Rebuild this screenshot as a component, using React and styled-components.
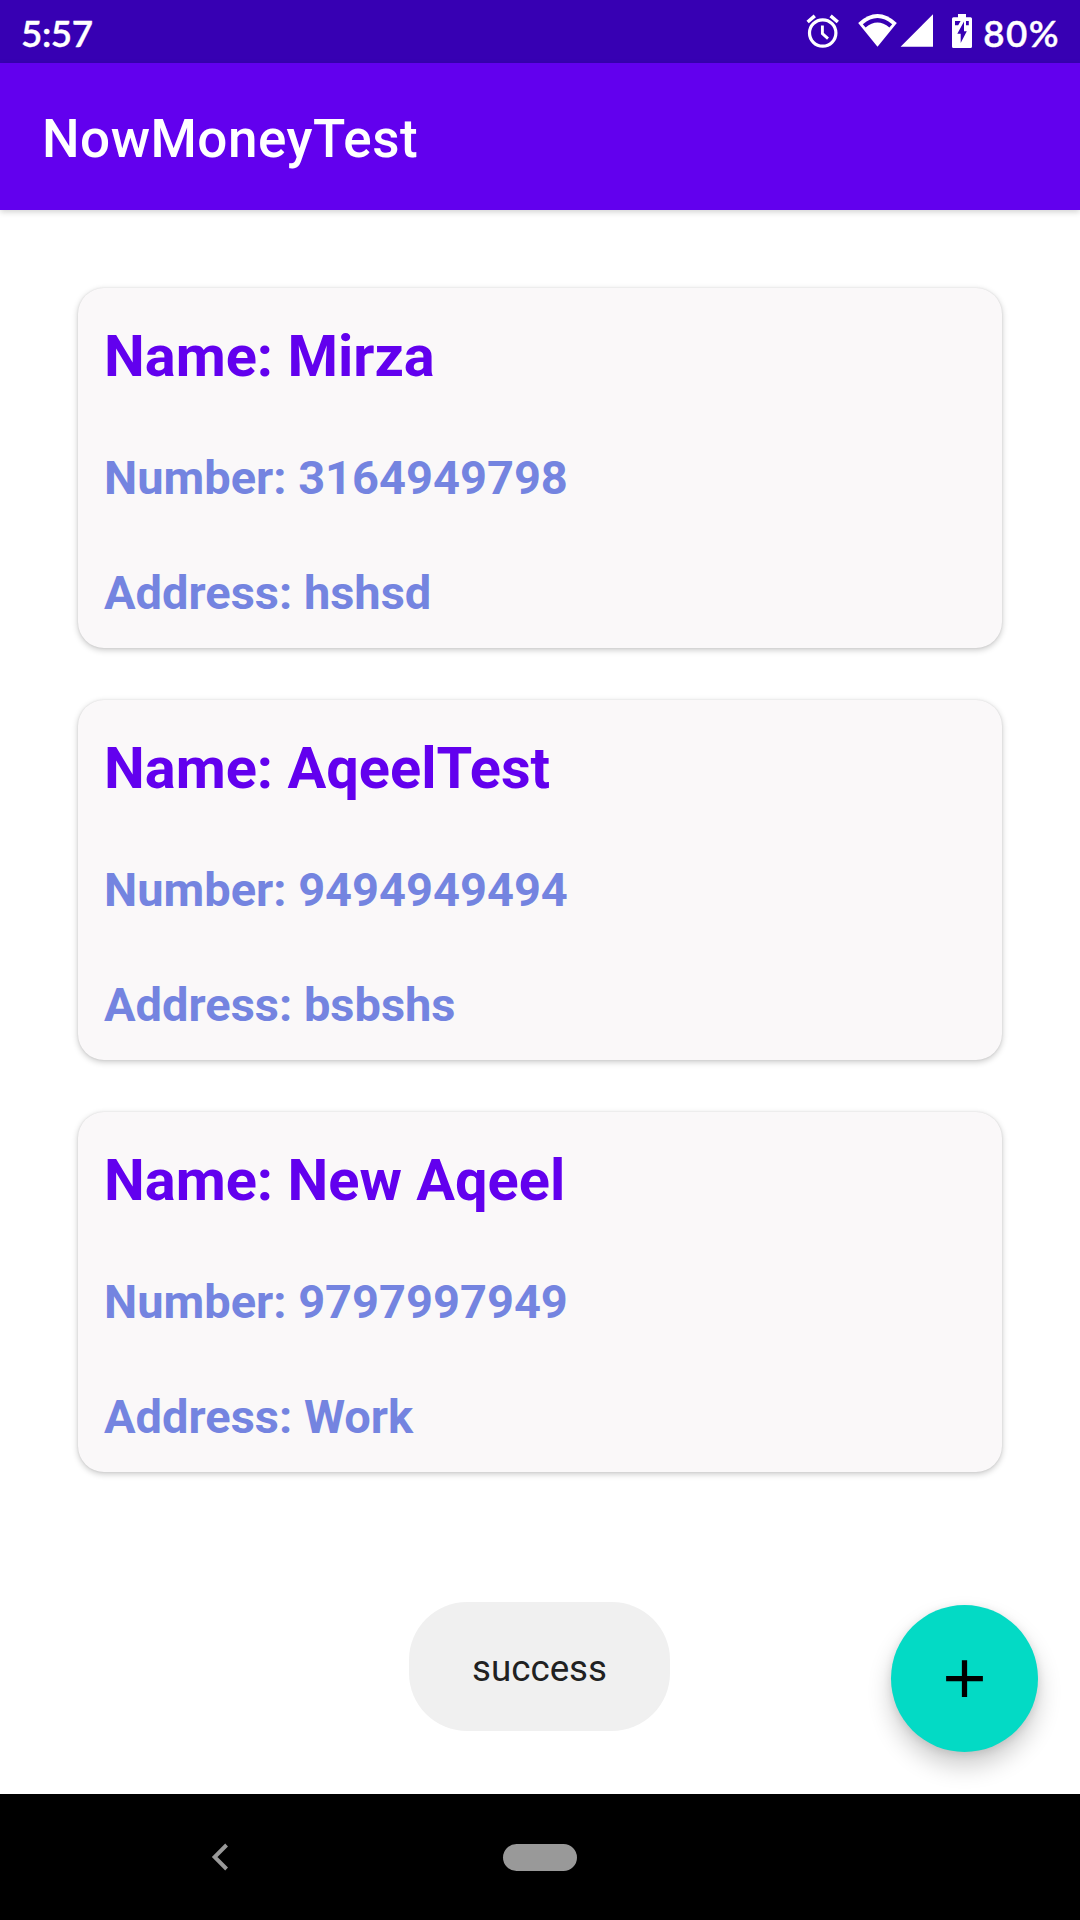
import React from "react";
import styled, { createGlobalStyle } from "styled-components";

const GlobalStyle = createGlobalStyle`
  body { margin: 0; background: #fff; }
  * { box-sizing: border-box; }
`;

const Screen = styled.div`
  position: relative;
  display: flex;
  flex-direction: column;
  width: 1080px;
  height: 1920px;
  overflow: hidden;
  background: #fff;
  font-family: Roboto, "Liberation Sans", sans-serif;
`;

const StatusBar = styled.header`
  display: flex;
  align-items: center;
  height: 63px;
  padding: 0 21px;
  background: #3700b3;
  color: #fff;
  font-family: Lato, Roboto, sans-serif;
  font-size: 36.75px;
  font-weight: 600;
  line-height: 44px;
  -webkit-text-stroke: 0.4px #fff;
`;

const Clock = styled.time`
  flex: 1;
  padding-top: 3px;
  letter-spacing: -0.4px;
`;

const Battery = styled.span`
  padding-top: 3px;
  margin: 0 -1px 0 10px;
  letter-spacing: 1.4px;
`;

const StatusIcon = styled.svg`
  flex: none;
  display: block;
  height: 63px;
  width: ${(p) => p.$width}px;
  margin-left: ${(p) => p.$gap || 0}px;
`;

const AppBar = styled.div`
  position: relative;
  display: flex;
  align-items: center;
  height: 147px;
  padding: 5px 42px 0;
  background: #6200ee;
  box-shadow: 0 2px 6px rgba(0, 0, 0, 0.18);
`;

const Title = styled.h1`
  margin: 0;
  color: #fff;
  font-size: 53px;
  font-weight: 500;
  line-height: 62px;
  letter-spacing: 0.5px;
`;

const List = styled.main`
  flex: 1;
  display: flex;
  flex-direction: column;
  gap: 52px;
  padding: 78px 78px 0;
`;

const Card = styled.article`
  height: 360px;
  padding: 34px 26px 0;
  border-radius: 26px;
  background: #faf8f9;
  box-shadow: 0 2px 6px rgba(0, 0, 0, 0.22), 0 0 2px rgba(0, 0, 0, 0.1);
`;

const Name = styled.h2`
  margin: 0 0 60px;
  color: #6200ee;
  font-size: 57.75px;
  font-weight: 700;
  line-height: 68px;
`;

const Detail = styled.p`
  margin: 0 0 59px;
  color: #7484e0;
  font-size: 47px;
  font-weight: 700;
  line-height: 56px;
`;

const Toast = styled.div`
  position: absolute;
  left: 409px;
  top: 1602px;
  display: flex;
  align-items: center;
  justify-content: center;
  width: 261px;
  height: 129px;
  padding-top: 4px;
  border-radius: 58px;
  background: #f0f0f0;
  color: #212121;
  font-size: 36.75px;
  line-height: 43px;
`;

const AddButton = styled.button`
  position: absolute;
  left: 891px;
  top: 1605px;
  display: grid;
  place-items: center;
  width: 147px;
  height: 147px;
  padding: 0;
  border: 0;
  border-radius: 50%;
  background: #03dac5;
  box-shadow: 0 14px 24px rgba(0, 0, 0, 0.2), 0 2px 8px rgba(0, 0, 0, 0.1);
`;

const NavBar = styled.nav`
  display: flex;
  align-items: center;
  height: 126px;
  padding-left: 210px;
  background: #000;
`;

const HomePill = styled.span`
  width: 74px;
  height: 27px;
  margin-left: 273px;
  border-radius: 14px;
  background: #999;
`;

const contacts = [
  { name: "Mirza", number: "3164949798", address: "hshsd" },
  { name: "AqeelTest", number: "9494949494", address: "bsbshs" },
  { name: "New Aqeel", number: "9797997949", address: "Work" },
];

const AlarmIcon = () => (
  <StatusIcon $width={34} viewBox="806 0 34 63" fill="none" stroke="#fff">
    <circle cx="822.7" cy="33" r="13.2" strokeWidth="3.2" />
    <path d="M822.4 25.5v8.2l5.6 4.9" strokeWidth="2.9" />
    <path d="M807.6 22l7.2-6.2M830.6 15.8l7.2 6.2" strokeWidth="3.5" />
  </StatusIcon>
);

const WifiIcon = () => (
  <StatusIcon $width={40} $gap={17} viewBox="857 0 40 63">
    <path fill="#fff" d="M877.5 46.7L858.2 23Q877.5 5.2 896.8 23Z" />
    <path fill="#3700b3" d="M862.8 24.2Q877.5 12 892.2 24.2L889.4 27.6Q877.5 17.4 865.6 27.6Z" />
  </StatusIcon>
);

const SignalIcon = () => (
  <StatusIcon $width={34} $gap={3} viewBox="900 0 34 63">
    <path fill="#fff" d="M900.6 46.7H933V14.2Z" />
  </StatusIcon>
);

const BatteryIcon = () => (
  <StatusIcon $width={22} $gap={17} viewBox="951 0 22 63">
    <path fill="#fff" d="M958 14h8v3.3h4.5a1.5 1.5 0 0 1 1.5 1.5v27.7a1.5 1.5 0 0 1-1.5 1.5h-17a1.5 1.5 0 0 1-1.5-1.5V18.8a1.5 1.5 0 0 1 1.5-1.5h4.5z" />
    <path fill="#3700b3" d="M955 21h5.6l-2.4 4.3H955zM966 21h2.8v4.3H966zM964 21.5v9.8h2.8L960.7 43v-9.2h-3.4z" />
  </StatusIcon>
);

export default function App() {
  return (
    <Screen>
      <GlobalStyle />
      <StatusBar>
        <Clock>5:57</Clock>
        <AlarmIcon />
        <WifiIcon />
        <SignalIcon />
        <BatteryIcon />
        <Battery>80%</Battery>
      </StatusBar>
      <AppBar>
        <Title>NowMoneyTest</Title>
      </AppBar>
      <List>
        {contacts.map((c) => (
          <Card key={c.number}>
            <Name>Name: {c.name}</Name>
            <Detail>Number: {c.number}</Detail>
            <Detail>Address: {c.address}</Detail>
          </Card>
        ))}
      </List>
      <NavBar>
        <svg width="20" height="30" viewBox="0 0 20 30" fill="none" stroke="#999" strokeWidth="3.9">
          <path d="M16.6 3L4.6 15l12 12" />
        </svg>
        <HomePill />
      </NavBar>
      <Toast>success</Toast>
      <AddButton aria-label="Add">
        <svg width="63" height="63" viewBox="0 0 24 24">
          <path d="M19 13h-6v6h-2v-6H5v-2h6V5h2v6h6z" />
        </svg>
      </AddButton>
    </Screen>
  );
}
